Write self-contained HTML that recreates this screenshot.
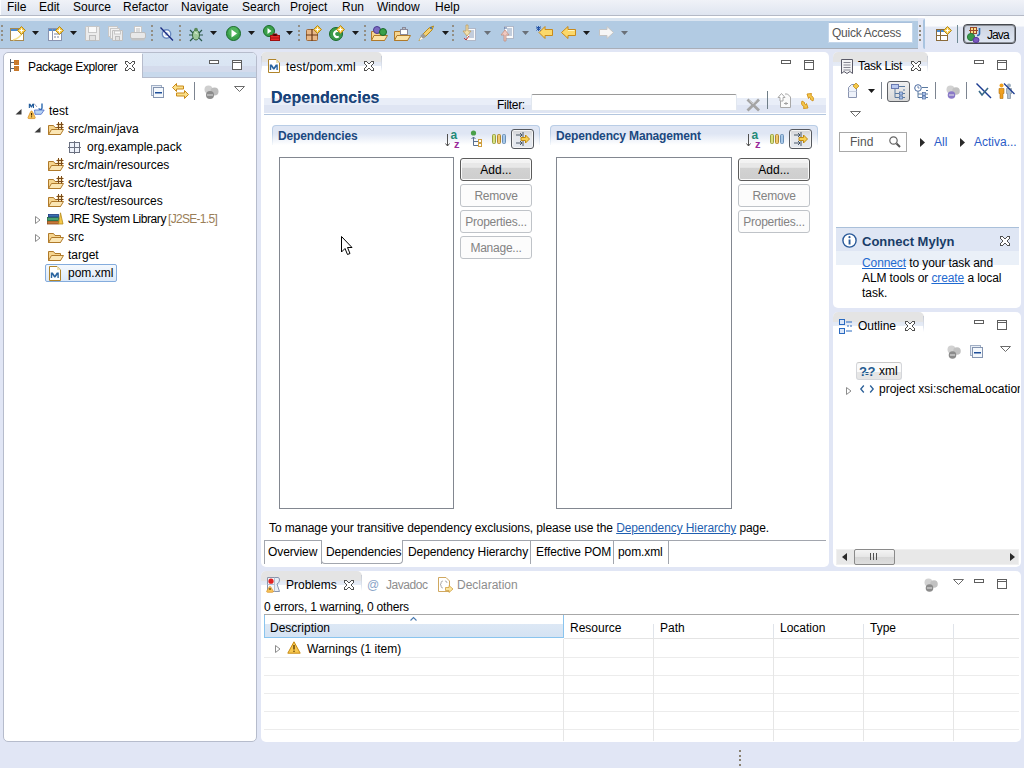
<!DOCTYPE html>
<html><head><meta charset="utf-8">
<style>
*{margin:0;padding:0;box-sizing:border-box}
html,body{width:1024px;height:768px;overflow:hidden}
body{position:relative;background:#E1E6F5;font-family:"Liberation Sans",sans-serif;font-size:12px;color:#000}
.a{position:absolute}
.t{position:absolute;white-space:nowrap;line-height:14px;font-size:12px;color:#000}
svg{position:absolute;overflow:visible}
.g{color:#8d8d8d}
.lk{color:#1f5fb0;text-decoration:underline}
</style></head><body>

<div class="a" style="left:0px;top:0px;width:1024px;height:15px;background:linear-gradient(#f0f2f8,#dfe5f0)"></div>
<div class="a" style="left:0px;top:0px;width:1px;height:15px;background:#fafbfd"></div>
<div class="a" style="left:0px;top:15px;width:1024px;height:1px;background:#b4b9c6"></div>
<div class="a" style="left:0px;top:16px;width:1024px;height:2px;background:#fff"></div>
<div class="a" style="left:0px;top:18px;width:918px;height:3px;background:#d9e4f0"></div>
<div class="t" style="left:7px;top:0px;">File</div>
<div class="t" style="left:39px;top:0px;">Edit</div>
<div class="t" style="left:73px;top:0px;">Source</div>
<div class="t" style="left:123px;top:0px;">Refactor</div>
<div class="t" style="left:181px;top:0px;">Navigate</div>
<div class="t" style="left:242px;top:0px;">Search</div>
<div class="t" style="left:290px;top:0px;">Project</div>
<div class="t" style="left:342px;top:0px;">Run</div>
<div class="t" style="left:377px;top:0px;">Window</div>
<div class="t" style="left:435px;top:0px;">Help</div>
<div class="a" style="left:0px;top:21px;width:918px;height:27px;background:#b2cbe3"></div>
<div class="a" style="left:0px;top:48px;width:918px;height:1px;background:#a9aeb8"></div>
<div class="a" style="left:925px;top:16px;width:99px;height:34px;background:linear-gradient(#fafbfd 0,#fafbfd 30%,#e3e8f4 32%,#e1e6f5 100%)"></div>
<svg style="left:1px;top:25px" width="3" height="17" viewBox="0 0 3 17"><rect x="0" y="0" width="2" height="2" fill="#8f8778" opacity="0.9"/><rect x="0" y="5" width="2" height="2" fill="#8f8778" opacity="0.9"/><rect x="0" y="9" width="2" height="2" fill="#8f8778" opacity="0.9"/><rect x="0" y="14" width="2" height="2" fill="#8f8778" opacity="0.9"/></svg>
<svg style="left:10px;top:26px" width="16" height="15" viewBox="0 0 16 15"><rect x="0.5" y="2.5" width="13" height="12" fill="#fff" stroke="#a88a50"/><rect x="1" y="3" width="12" height="2" fill="#4a8ad0"/><path d="M3 14 Q10 12 12 7" stroke="#f5e08a" fill="none" stroke-width="1.5"/><path d="M11.5 0.5 L15.5 4.5 L11.5 8.5 L7.5 4.5 Z" fill="#f4c84a" stroke="#b58a1a"/><path d="M11.5 2.5v4M9.5 4.5h4" stroke="#fff"/></svg>
<svg style="left:32px;top:31px" width="7" height="4" viewBox="0 0 7 4"><path d="M0 0 H7 L3.5 4 Z" fill="#1a1a1a"/></svg>
<svg style="left:48px;top:26px" width="16" height="15" viewBox="0 0 16 15"><rect x="0.5" y="2.5" width="13" height="12" fill="#fff" stroke="#8a94b0"/><rect x="1" y="3" width="12" height="2" fill="#4a8ad0"/><path d="M4.5 3 V14" stroke="#8a94b0"/><path d="M6 8h5M6 11h2M9 11h2" stroke="#7a84a0"/><path d="M11.5 0.5 L15.5 4.5 L11.5 8.5 L7.5 4.5 Z" fill="#f4c84a" stroke="#b58a1a"/><path d="M11.5 2.5v4M9.5 4.5h4" stroke="#fff"/></svg>
<svg style="left:70px;top:31px" width="7" height="4" viewBox="0 0 7 4"><path d="M0 0 H7 L3.5 4 Z" fill="#1a1a1a"/></svg>
<svg style="left:85px;top:26px" width="15" height="15" viewBox="0 0 15 15"><path d="M0.5 1.5 Q0.5 0.5 1.5 0.5 H13.5 Q14.5 0.5 14.5 1.5 V14.5 H0.5 Z" fill="#ececec" stroke="#c4c4c4"/><rect x="3.5" y="0.5" width="8" height="6" fill="#fafafa" stroke="#c8c8c8"/><rect x="4.5" y="9.5" width="6" height="5" fill="#e2e2e2" stroke="#bdbdbd"/></svg>
<svg style="left:108px;top:26px" width="15" height="15" viewBox="0 0 15 15"><rect x="0.5" y="0.5" width="9" height="10" fill="#f2f2f2" stroke="#c8c8c8"/><rect x="2.5" y="2.5" width="9" height="10" fill="#f2f2f2" stroke="#c8c8c8"/><path d="M4.5 4.5 H14.5 V14.5 H4.5 Z" fill="#ececec" stroke="#c0c0c0"/><rect x="6.5" y="5" width="6" height="3" fill="#fafafa" stroke="#c8c8c8"/><rect x="7.5" y="10.5" width="4" height="4" fill="#e2e2e2" stroke="#bdbdbd"/></svg>
<svg style="left:130px;top:26px" width="16" height="15" viewBox="0 0 16 15"><rect x="4.5" y="0.5" width="7" height="7" fill="#fafafa" stroke="#c8c8c8"/><path d="M6 3h4M6 5h4" stroke="#bdbdbd"/><rect x="0.5" y="6.5" width="15" height="6" rx="1.5" fill="#e8e8e8" stroke="#bdbdbd"/><rect x="1.5" y="12.5" width="13" height="2" fill="#c4c4c4"/></svg>
<svg style="left:151px;top:25px" width="3" height="17" viewBox="0 0 3 17"><rect x="0" y="0" width="2" height="2" fill="#8f8778" opacity="0.9"/><rect x="0" y="5" width="2" height="2" fill="#8f8778" opacity="0.9"/><rect x="0" y="9" width="2" height="2" fill="#8f8778" opacity="0.9"/><rect x="0" y="14" width="2" height="2" fill="#8f8778" opacity="0.9"/></svg>
<svg style="left:160px;top:27px" width="14" height="14" viewBox="0 0 14 14"><circle cx="6.5" cy="7" r="4.2" fill="#fff" stroke="#6a8ac0" stroke-width="1.4"/><circle cx="6.5" cy="7" r="2" fill="#b8cce8"/><path d="M0.5 0.5 L13 13.5" stroke="#1a2a80" stroke-width="1.3"/></svg>
<svg style="left:179px;top:25px" width="3" height="17" viewBox="0 0 3 17"><rect x="0" y="0" width="2" height="2" fill="#8f8778" opacity="0.9"/><rect x="0" y="5" width="2" height="2" fill="#8f8778" opacity="0.9"/><rect x="0" y="9" width="2" height="2" fill="#8f8778" opacity="0.9"/><rect x="0" y="14" width="2" height="2" fill="#8f8778" opacity="0.9"/></svg>
<svg style="left:188px;top:26px" width="16" height="16" viewBox="0 0 16 16"><ellipse cx="8" cy="9" rx="3.5" ry="5" fill="#9ec89a" stroke="#3a6a3a"/><circle cx="8" cy="3.5" r="1.8" fill="#5a8a5a"/><path d="M2 4 L5 7 M14 4 L11 7 M1 9 H4.5 M15 9 H11.5 M2 15 L5 12 M14 15 L11 12" stroke="#2a5a4a" stroke-width="1.2"/><path d="M6.5 7 Q8 6 9.5 8" stroke="#e8f8e0" fill="none"/></svg>
<svg style="left:210px;top:31px" width="7" height="4" viewBox="0 0 7 4"><path d="M0 0 H7 L3.5 4 Z" fill="#1a1a1a"/></svg>
<svg style="left:226px;top:26px" width="15" height="15" viewBox="0 0 15 15"><circle cx="7.5" cy="7.5" r="7" fill="#3aa04a" stroke="#1a6a2a"/><circle cx="7.5" cy="6" r="5" fill="#5ec06a" opacity="0.6"/><path d="M5.5 3.5 L11 7.5 L5.5 11.5 Z" fill="#fff"/></svg>
<svg style="left:248px;top:31px" width="7" height="4" viewBox="0 0 7 4"><path d="M0 0 H7 L3.5 4 Z" fill="#1a1a1a"/></svg>
<svg style="left:263px;top:25px" width="17" height="17" viewBox="0 0 17 17"><circle cx="6" cy="6" r="5.5" fill="#3aa04a" stroke="#1a6a2a"/><path d="M4.5 3 L8.5 6 L4.5 9 Z" fill="#fff"/><rect x="7.5" y="10.5" width="9" height="5" fill="#e82a2a" stroke="#a01010"/><path d="M10 10.5v-1.5h4v1.5M7.5 13h9" stroke="#a01010"/></svg>
<svg style="left:286px;top:31px" width="7" height="4" viewBox="0 0 7 4"><path d="M0 0 H7 L3.5 4 Z" fill="#1a1a1a"/></svg>
<svg style="left:298px;top:25px" width="3" height="17" viewBox="0 0 3 17"><rect x="0" y="0" width="2" height="2" fill="#8f8778" opacity="0.9"/><rect x="0" y="5" width="2" height="2" fill="#8f8778" opacity="0.9"/><rect x="0" y="9" width="2" height="2" fill="#8f8778" opacity="0.9"/><rect x="0" y="14" width="2" height="2" fill="#8f8778" opacity="0.9"/></svg>
<svg style="left:306px;top:25px" width="16" height="16" viewBox="0 0 16 16"><rect x="0.5" y="4.5" width="11" height="11" rx="1" fill="#e8b888" stroke="#a06a3a"/><path d="M6 4 V16 M0 10 H12" stroke="#6a3a1a" stroke-width="1.2"/><path d="M11.5 0.5 L15.5 4.5 L11.5 8.5 L7.5 4.5 Z" fill="#f4c84a" stroke="#b58a1a"/><path d="M11.5 2.5v4M9.5 4.5h4" stroke="#fff"/></svg>
<svg style="left:329px;top:25px" width="16" height="16" viewBox="0 0 16 16"><circle cx="7" cy="9" r="6.5" fill="#3a9a4a" stroke="#1a6a2a"/><path d="M9.8 6.5 A3 3 0 1 0 9.8 11.5" stroke="#fff" stroke-width="2" fill="none"/><path d="M11.5 0.5 L15.5 4.5 L11.5 8.5 L7.5 4.5 Z" fill="#f4c84a" stroke="#b58a1a"/><path d="M11.5 2.5v4M9.5 4.5h4" stroke="#fff"/></svg>
<svg style="left:352px;top:31px" width="7" height="4" viewBox="0 0 7 4"><path d="M0 0 H7 L3.5 4 Z" fill="#1a1a1a"/></svg>
<svg style="left:364px;top:25px" width="3" height="17" viewBox="0 0 3 17"><rect x="0" y="0" width="2" height="2" fill="#8f8778" opacity="0.9"/><rect x="0" y="5" width="2" height="2" fill="#8f8778" opacity="0.9"/><rect x="0" y="9" width="2" height="2" fill="#8f8778" opacity="0.9"/><rect x="0" y="14" width="2" height="2" fill="#8f8778" opacity="0.9"/></svg>
<svg style="left:371px;top:26px" width="17" height="15" viewBox="0 0 17 15"><path d="M0.5 5.5 H6 L7 7 H13.5 V14.5 H0.5 Z" fill="#f6d58f" stroke="#b07a2a"/><path d="M0.5 14.5 L3 9.5 H16.5 L13.5 14.5 Z" fill="#fbe3a8" stroke="#b07a2a"/><circle cx="6" cy="4" r="3.5" fill="#7a6ac0" stroke="#4a3a90"/><circle cx="12" cy="6" r="3.5" fill="#3aa04a" stroke="#1a6a2a"/></svg>
<svg style="left:394px;top:26px" width="17" height="15" viewBox="0 0 17 15"><path d="M0.5 5.5 H6 L7 7 H13.5 V14.5 H0.5 Z" fill="#f6d58f" stroke="#b07a2a"/><path d="M0.5 14.5 L3 9.5 H16.5 L13.5 14.5 Z" fill="#fbe3a8" stroke="#b07a2a"/><rect x="6.5" y="3.5" width="7" height="5" fill="#fff" stroke="#8a8a9a"/><rect x="8.5" y="1.5" width="3" height="2" fill="#bbb" stroke="#8a8a9a"/></svg>
<svg style="left:417px;top:25px" width="18" height="17" viewBox="0 0 18 17"><path d="M2 15.5 L6 9 L12 3 L16.5 1 L15 5 L9 11 Z" fill="#f5d070" stroke="#b58a1a"/><path d="M2 15.5 L4.5 11.5 L6.5 13.5 Z" fill="#fff"/><rect x="4" y="9" width="4" height="4" transform="rotate(45 6 11)" fill="#9a9a9a"/><circle cx="14" cy="3" r="1" fill="#2a6ac0"/></svg>
<svg style="left:442px;top:31px" width="7" height="4" viewBox="0 0 7 4"><path d="M0 0 H7 L3.5 4 Z" fill="#1a1a1a"/></svg>
<svg style="left:452px;top:25px" width="3" height="17" viewBox="0 0 3 17"><rect x="0" y="0" width="2" height="2" fill="#8f8778" opacity="0.9"/><rect x="0" y="5" width="2" height="2" fill="#8f8778" opacity="0.9"/><rect x="0" y="9" width="2" height="2" fill="#8f8778" opacity="0.9"/><rect x="0" y="14" width="2" height="2" fill="#8f8778" opacity="0.9"/></svg>
<svg style="left:462px;top:25px" width="14" height="16" viewBox="0 0 14 16"><rect x="4.5" y="3.5" width="9" height="12" fill="#fafafa" stroke="#b0b8c8"/><path d="M7 6h5M7 8h5M7 10h5M7 12h5" stroke="#8aa0c0"/><path d="M4 0 V6 H1 L5 11 L9 6 H6 V0 Z" fill="#f0e0b0" stroke="#c0a060" stroke-width="0.8"/><path d="M2 13 l2 2 l3 -4" stroke="#c03a3a" fill="none"/></svg>
<svg style="left:484px;top:31px" width="7" height="4" viewBox="0 0 7 4"><path d="M0 0 H7 L3.5 4 Z" fill="#6a7078"/></svg>
<svg style="left:500px;top:25px" width="14" height="16" viewBox="0 0 14 16"><rect x="4.5" y="1.5" width="9" height="12" fill="#fafafa" stroke="#b0b8c8"/><path d="M7 4h5M7 6h5M7 8h5M7 10h5" stroke="#8aa0c0"/><path d="M4 16 V10 H1 L5 5 L9 10 H6 V16 Z" fill="#f0c8c0" stroke="#c09080" stroke-width="0.8"/><path d="M4 3h3" stroke="#4a6aa0"/></svg>
<svg style="left:522px;top:31px" width="7" height="4" viewBox="0 0 7 4"><path d="M0 0 H7 L3.5 4 Z" fill="#6a7078"/></svg>
<svg style="left:536px;top:26px" width="17" height="13" viewBox="0 0 17 13"><path d="M16.5 3.5 H9 V0.5 L3 6.5 L9 12.5 V9.5 H16.5 Z" fill="#fbd86a" stroke="#c98a1a"/><path d="M0 2h5M2.5 0v5M0.5 0.5l4 4M4.5 0.5l-4 4" stroke="#1a4aa0" stroke-width="0.9"/></svg>
<svg style="left:561px;top:26px" width="15" height="13" viewBox="0 0 15 13"><path d="M14.5 3.5 H7 V0.5 L0.5 6.5 L7 12.5 V9.5 H14.5 Z" fill="#fbd86a" stroke="#c98a1a"/><path d="M7 4.5 H13.5" stroke="#fff6c0"/></svg>
<svg style="left:583px;top:31px" width="7" height="4" viewBox="0 0 7 4"><path d="M0 0 H7 L3.5 4 Z" fill="#1a1a1a"/></svg>
<svg style="left:599px;top:26px" width="15" height="13" viewBox="0 0 15 13"><path d="M0.5 3.5 H8 V0.5 L14.5 6.5 L8 12.5 V9.5 H0.5 Z" fill="#f6f6f6" stroke="#c4c4c4"/></svg>
<svg style="left:621px;top:31px" width="7" height="4" viewBox="0 0 7 4"><path d="M0 0 H7 L3.5 4 Z" fill="#6a7078"/></svg>
<div class="a" style="left:823px;top:21px;width:95px;height:27px;background:#b2cbe3"></div>
<div class="a" style="left:828px;top:22px;width:85px;height:21px;background:#fff;border:1px solid #c4d6ea;border-top-color:#a9c0dc"></div>
<div class="t" style="left:832px;top:26px;color:#555;letter-spacing:-0.25px">Quick Access</div>
<svg style="left:919px;top:23px" width="2" height="18" viewBox="0 0 2 18"><rect x="0" y="2" width="2" height="2" fill="#8f8778"/><rect x="0" y="7" width="2" height="2" fill="#8f8778"/><rect x="0" y="11" width="2" height="2" fill="#8f8778"/><rect x="0" y="16" width="2" height="2" fill="#8f8778"/></svg>
<div class="a" style="left:923px;top:19px;width:2px;height:30px;background:#a9c4e0;border-radius:2px 0 0 2px"></div>
<svg style="left:936px;top:26px" width="16" height="15" viewBox="0 0 16 15"><rect x="0.5" y="3.5" width="11" height="11" fill="#fff" stroke="#8a6a3a"/><rect x="1" y="4" width="10" height="2" fill="#4a8ad0"/><path d="M4.5 4 V14 M1 9.5 H11" stroke="#8a6a3a"/><path d="M11.5 0.5 L15.5 4.5 L11.5 8.5 L7.5 4.5 Z" fill="#f4c84a" stroke="#b58a1a"/><path d="M11.5 2.5v4M9.5 4.5h4" stroke="#fff"/></svg>
<div class="a" style="left:957px;top:25px;width:1px;height:18px;background:#6f8a94"></div>
<div class="a" style="left:963px;top:24px;width:53px;height:20px;background:linear-gradient(#c8cfdb,#d4dbe8 40%,#dfe6f2);border:1px solid #45484e;border-radius:4px;box-shadow:inset 0 0 0 1px #8a8e96"></div>
<svg style="left:967px;top:27px" width="14" height="16" viewBox="0 0 14 16"><rect x="3.5" y="0.5" width="6" height="6" fill="#fbe08a" stroke="#9a4a2a"/><path d="M6.5 0 V7 M2 3.5 H11" stroke="#9a4a2a"/><path d="M12.5 1 V6.5 Q12.5 8.5 10 8.5" stroke="#2a6ab0" stroke-width="1.6" fill="none"/><circle cx="4" cy="10" r="3.6" fill="#3a9a4a" stroke="#2a7a3a"/><ellipse cx="9" cy="13" rx="3" ry="2.6" fill="#7a5ac0" stroke="#5a3aa0"/></svg>
<div class="t" style="left:987px;top:28px;letter-spacing:-0.9px">Java</div>
<div class="a" style="left:3px;top:52px;width:254px;height:690px;background:#fff;border:1px solid #b6bccc;border-radius:5px"></div>
<div class="a" style="left:142px;top:53px;width:114px;height:24px;background:linear-gradient(#dce7f4 0,#dae5f3 52%,#d4dbec 55%,#d4dbec 78%,#c8d9ec 81%,#c8d9ec 100%);border-top-right-radius:4px"></div>
<div class="a" style="left:142px;top:77px;width:114px;height:1px;background:#b6bccc"></div>
<div class="a" style="left:142px;top:54px;width:1px;height:23px;background:#b6bccc"></div>
<svg style="left:9px;top:59px" width="14" height="13" viewBox="0 0 14 13"><path d="M1.5 0 V13 M1.5 3.5 H5 M1.5 9.5 H5" stroke="#5a6470"/><rect x="5" y="1" width="5" height="5" fill="#c8782a"/><rect x="5" y="7" width="5" height="5" fill="#c8782a"/><path d="M6.5 2.5h0.1M8.5 2.5h0.1M6.5 4.5h0.1M8.5 4.5h0.1M6.5 8.5h0.1M8.5 8.5h0.1M6.5 10.5h0.1M8.5 10.5h0.1" stroke="#fff4b0" stroke-width="1.2"/></svg>
<div class="t" style="left:28px;top:60px;letter-spacing:-0.35px">Package Explorer</div>
<svg style="left:125px;top:61px" width="10" height="10" viewBox="0 0 10 10"><g fill="#fff" shape-rendering="crispEdges"><rect x="1" y="1" width="2" height="1"/><rect x="7" y="1" width="2" height="1"/><rect x="1" y="2" width="3" height="1"/><rect x="6" y="2" width="3" height="1"/><rect x="2" y="3" width="6" height="1"/><rect x="3" y="4" width="4" height="1"/><rect x="3" y="5" width="4" height="1"/><rect x="2" y="6" width="6" height="1"/><rect x="1" y="7" width="3" height="1"/><rect x="6" y="7" width="3" height="1"/><rect x="1" y="8" width="2" height="1"/><rect x="7" y="8" width="2" height="1"/></g><g fill="#505050" shape-rendering="crispEdges"><rect x="0" y="0" width="1" height="1"/><rect x="1" y="0" width="1" height="1"/><rect x="2" y="0" width="1" height="1"/><rect x="7" y="0" width="1" height="1"/><rect x="8" y="0" width="1" height="1"/><rect x="9" y="0" width="1" height="1"/><rect x="0" y="1" width="1" height="1"/><rect x="3" y="1" width="1" height="1"/><rect x="6" y="1" width="1" height="1"/><rect x="9" y="1" width="1" height="1"/><rect x="0" y="2" width="1" height="1"/><rect x="4" y="2" width="1" height="1"/><rect x="5" y="2" width="1" height="1"/><rect x="9" y="2" width="1" height="1"/><rect x="1" y="3" width="1" height="1"/><rect x="8" y="3" width="1" height="1"/><rect x="2" y="4" width="1" height="1"/><rect x="7" y="4" width="1" height="1"/><rect x="2" y="5" width="1" height="1"/><rect x="7" y="5" width="1" height="1"/><rect x="1" y="6" width="1" height="1"/><rect x="8" y="6" width="1" height="1"/><rect x="0" y="7" width="1" height="1"/><rect x="4" y="7" width="1" height="1"/><rect x="5" y="7" width="1" height="1"/><rect x="9" y="7" width="1" height="1"/><rect x="0" y="8" width="1" height="1"/><rect x="3" y="8" width="1" height="1"/><rect x="6" y="8" width="1" height="1"/><rect x="9" y="8" width="1" height="1"/><rect x="0" y="9" width="1" height="1"/><rect x="1" y="9" width="1" height="1"/><rect x="2" y="9" width="1" height="1"/><rect x="7" y="9" width="1" height="1"/><rect x="8" y="9" width="1" height="1"/><rect x="9" y="9" width="1" height="1"/></g></svg>
<svg style="left:209px;top:60px" width="10" height="4" viewBox="0 0 10 4"><rect x="0.5" y="0.5" width="9" height="3" fill="#fff" stroke="#5e5e5e"/></svg>
<svg style="left:232px;top:60px" width="10" height="10" viewBox="0 0 10 10"><rect x="0.5" y="0.5" width="9" height="9" fill="#fff" stroke="#5e5e5e"/><rect x="1" y="2" width="8" height="1" fill="#5e5e5e"/></svg>
<svg style="left:151px;top:85px" width="13" height="13" viewBox="0 0 13 13"><rect x="0.5" y="0.5" width="10" height="10" fill="#e8eef6" stroke="#a0aec4"/><rect x="2.5" y="2.5" width="10" height="10" fill="#f4f8fc" stroke="#8494b0"/><rect x="4" y="7" width="7" height="1.5" fill="#1f4f9a"/></svg>
<svg style="left:172px;top:83px" width="17" height="16" viewBox="0 0 17 16"><path d="M0.5 4.5 L4.5 0.5 V3 H11.5 V6 H4.5 V8.5 Z" fill="#fbe08a" stroke="#c98a1a"/><path d="M16.5 11.5 L12.5 7.5 V10 H4.5 V13 H12.5 V15.5 Z" fill="#fbe08a" stroke="#c98a1a"/></svg>
<div class="a" style="left:194px;top:82px;width:1px;height:18px;background:#7c8490"></div>
<svg style="left:204px;top:85px" width="15" height="14" viewBox="0 0 15 14"><circle cx="4.5" cy="4.5" r="4" fill="#cfcfcf"/><circle cx="10.5" cy="6.5" r="4" fill="#bdbdbd"/><circle cx="6" cy="10" r="4" fill="#8c8c8c"/><path d="M3 10h6" stroke="#e0e0e0"/></svg>
<svg style="left:234px;top:86px" width="11" height="6" viewBox="0 0 11 6"><path d="M0.5 0.5 H10.5 L5.5 5.5 Z" fill="#fff" stroke="#6b6b6b"/></svg>
<svg style="left:15px;top:109px" width="7" height="6" viewBox="0 0 7 6"><path d="M6.5 0 V5.5 H0.5 Z" fill="#3c3c3c"/></svg>
<svg style="left:28px;top:103px" width="17" height="17" viewBox="0 0 17 17"><path d="M0.8 5 V0.8 H2.4 L3.4 2.8 L4.4 0.8 H6 V5 H4.9 V2.8 L3.8 4.6 H3 L1.9 2.8 V5 Z" fill="#1f5a9a"/><path d="M14 0.5 V5 Q14 6.5 12.5 6.5 Q11 6.5 11 5.2" stroke="#2a68b0" stroke-width="1.4" fill="none"/><path d="M6.5 7 H16.2 L13.2 11.3 H7 Z" fill="#b8d4f4" stroke="#4a6ac8" stroke-width="0.8"/><path d="M6 0.5 L9 4" stroke="#6a7aa0" stroke-width="0.7"/><path d="M3.5 8 Q4.2 8 4.6 9 L7.2 14.5 Q7.4 15.6 6.3 15.6 H0.8 Q-0.3 15.6 0 14.5 L2.5 9 Q2.9 8 3.5 8 Z" fill="#f8c458" stroke="#d89028" stroke-width="0.8"/><path d="M3.6 10 V12.6" stroke="#3a2000" stroke-width="1.1"/><rect x="3.1" y="13.3" width="1" height="1" fill="#3a2000"/></svg>
<div class="t" style="left:49px;top:104px;">test</div>
<svg style="left:34px;top:127px" width="7" height="6" viewBox="0 0 7 6"><path d="M6.5 0 V5.5 H0.5 Z" fill="#3c3c3c"/></svg>
<svg style="left:48px;top:122px" width="16" height="14" viewBox="0 0 16 14"><path d="M0.5 3.5 V12.5 H12.5 V5.5 H7 L5.5 3.5 Z" fill="#f6d58f" stroke="#b07a2a"/><path d="M0.5 12.5 L3.5 7.5 H15.5 L12.5 12.5 Z" fill="#fbe6b4" stroke="#b07a2a"/><rect x="9" y="1" width="6" height="6" fill="#f8e4b8"/><path d="M10.5 0 V7.5 M13.5 0 V7.5 M8.5 2.5 H15.5 M8.5 5.5 H15.5" stroke="#7a4a1a"/></svg>
<div class="t" style="left:68px;top:122px;">src/main/java</div>
<svg style="left:68px;top:141px" width="13" height="13" viewBox="0 0 13 13"><rect x="1.5" y="1.5" width="10" height="10" fill="#eef2fa" stroke="#6a7080"/><path d="M6.5 0 V13 M0 6.5 H13" stroke="#6a7080"/></svg>
<div class="t" style="left:87px;top:140px;">org.example.pack</div>
<svg style="left:48px;top:158px" width="16" height="14" viewBox="0 0 16 14"><path d="M0.5 3.5 V12.5 H12.5 V5.5 H7 L5.5 3.5 Z" fill="#f6d58f" stroke="#b07a2a"/><path d="M0.5 12.5 L3.5 7.5 H15.5 L12.5 12.5 Z" fill="#fbe6b4" stroke="#b07a2a"/><rect x="9" y="1" width="6" height="6" fill="#f8e4b8"/><path d="M10.5 0 V7.5 M13.5 0 V7.5 M8.5 2.5 H15.5 M8.5 5.5 H15.5" stroke="#7a4a1a"/></svg>
<div class="t" style="left:68px;top:158px;">src/main/resources</div>
<svg style="left:48px;top:176px" width="16" height="14" viewBox="0 0 16 14"><path d="M0.5 3.5 V12.5 H12.5 V5.5 H7 L5.5 3.5 Z" fill="#f6d58f" stroke="#b07a2a"/><path d="M0.5 12.5 L3.5 7.5 H15.5 L12.5 12.5 Z" fill="#fbe6b4" stroke="#b07a2a"/><rect x="9" y="1" width="6" height="6" fill="#f8e4b8"/><path d="M10.5 0 V7.5 M13.5 0 V7.5 M8.5 2.5 H15.5 M8.5 5.5 H15.5" stroke="#7a4a1a"/></svg>
<div class="t" style="left:68px;top:176px;">src/test/java</div>
<svg style="left:48px;top:194px" width="16" height="14" viewBox="0 0 16 14"><path d="M0.5 3.5 V12.5 H12.5 V5.5 H7 L5.5 3.5 Z" fill="#f6d58f" stroke="#b07a2a"/><path d="M0.5 12.5 L3.5 7.5 H15.5 L12.5 12.5 Z" fill="#fbe6b4" stroke="#b07a2a"/><rect x="9" y="1" width="6" height="6" fill="#f8e4b8"/><path d="M10.5 0 V7.5 M13.5 0 V7.5 M8.5 2.5 H15.5 M8.5 5.5 H15.5" stroke="#7a4a1a"/></svg>
<div class="t" style="left:68px;top:194px;">src/test/resources</div>
<svg style="left:35px;top:216px" width="6" height="8" viewBox="0 0 6 8"><path d="M0.5 0.5 L5 4 L0.5 7.5 Z" fill="#fff" stroke="#8c8c8c"/></svg>
<svg style="left:47px;top:212px" width="17" height="13" viewBox="0 0 17 13"><rect x="0.5" y="9" width="11" height="3" fill="#c87a3a" stroke="#8a4a1a" stroke-width="0.8"/><rect x="0.5" y="5.5" width="11" height="3" fill="#4aa070" stroke="#1a6a3a" stroke-width="0.8"/><rect x="1.5" y="2.5" width="10" height="2.5" fill="#3a70b0" stroke="#1a3a80" stroke-width="0.8"/><path d="M11.5 12 L13.5 0.8 L16 12 Z" fill="#f5c84a" stroke="#b58a1a" stroke-width="0.8"/></svg>
<div class="t" style="left:68px;top:212px;letter-spacing:-0.45px">JRE System Library</div>
<div class="t" style="left:168px;top:212px;letter-spacing:-0.7px;color:#9a7e58">[J2SE-1.5]</div>
<svg style="left:35px;top:234px" width="6" height="8" viewBox="0 0 6 8"><path d="M0.5 0.5 L5 4 L0.5 7.5 Z" fill="#fff" stroke="#8c8c8c"/></svg>
<svg style="left:48px;top:230px" width="16" height="14" viewBox="0 0 16 14"><path d="M0.5 3.5 V12.5 H12.5 V5.5 H7 L5.5 3.5 Z" fill="#f6d58f" stroke="#b07a2a"/><path d="M0.5 12.5 L3.5 7.5 H15.5 L12.5 12.5 Z" fill="#fbe6b4" stroke="#b07a2a"/></svg>
<div class="t" style="left:68px;top:230px;">src</div>
<svg style="left:48px;top:248px" width="16" height="14" viewBox="0 0 16 14"><path d="M0.5 3.5 V12.5 H12.5 V5.5 H7 L5.5 3.5 Z" fill="#f6d58f" stroke="#b07a2a"/><path d="M0.5 12.5 L3.5 7.5 H15.5 L12.5 12.5 Z" fill="#fbe6b4" stroke="#b07a2a"/></svg>
<div class="t" style="left:68px;top:248px;">target</div>
<div class="a" style="left:45px;top:264px;width:72px;height:18px;background:linear-gradient(#f4f8fd,#dce9f8);border:1px solid #84acdd;border-radius:2px"></div>
<svg style="left:49px;top:266px" width="12" height="15" viewBox="0 0 12 15"><path d="M0.5 0.5 H8 L11.5 4 V14.5 H0.5 Z" fill="#fff" stroke="#b0842a"/><path d="M8 0.5 V4 H11.5 Z" fill="#f0e2b0"/><path d="M1.8 12 V6.5 H3.8 L5.8 9.5 L7.8 6.5 H9.8 V12 H8.4 V8.8 L6.4 11.5 H5.2 L3.2 8.8 V12 Z" fill="#2a64a0"/></svg>
<div class="t" style="left:68px;top:266px;">pom.xml</div>
<div class="a" style="left:261px;top:52px;width:568px;height:515px;background:#fff;border-radius:5px"></div>
<div class="a" style="left:261px;top:52px;width:121px;height:25px;background:linear-gradient(#e4e4e4 0,#e4e4e4 40%,#e2e8f4 41%,#e6ecf6 54%,#fff 58%);border-top-left-radius:5px;border-top-right-radius:5px"></div>
<div class="a" style="left:381px;top:56px;width:1px;height:16px;background:linear-gradient(#c8ccd4,#e0e6f0 70%,#fff)"></div>
<div class="a" style="left:261px;top:56px;width:1px;height:16px;background:linear-gradient(#c8ccd4,#e0e6f0 70%,#fff)"></div>
<svg style="left:268px;top:59px" width="12" height="14" viewBox="0 0 12 14"><path d="M0.5 0.5 H8 L11.5 4 V13.5 H0.5 Z" fill="#fff" stroke="#b0842a"/><path d="M8 0.5 V4 H11.5 Z" fill="#f0e2b0"/><path d="M1.8 11 V5.5 H3.8 L5.8 8.5 L7.8 5.5 H9.8 V11 H8.4 V7.8 L6.4 10.5 H5.2 L3.2 7.8 V11 Z" fill="#2a64a0"/></svg>
<div class="t" style="left:286px;top:60px;letter-spacing:0.15px">test/pom.xml</div>
<svg style="left:364px;top:61px" width="10" height="10" viewBox="0 0 10 10"><g fill="#fff" shape-rendering="crispEdges"><rect x="1" y="1" width="2" height="1"/><rect x="7" y="1" width="2" height="1"/><rect x="1" y="2" width="3" height="1"/><rect x="6" y="2" width="3" height="1"/><rect x="2" y="3" width="6" height="1"/><rect x="3" y="4" width="4" height="1"/><rect x="3" y="5" width="4" height="1"/><rect x="2" y="6" width="6" height="1"/><rect x="1" y="7" width="3" height="1"/><rect x="6" y="7" width="3" height="1"/><rect x="1" y="8" width="2" height="1"/><rect x="7" y="8" width="2" height="1"/></g><g fill="#505050" shape-rendering="crispEdges"><rect x="0" y="0" width="1" height="1"/><rect x="1" y="0" width="1" height="1"/><rect x="2" y="0" width="1" height="1"/><rect x="7" y="0" width="1" height="1"/><rect x="8" y="0" width="1" height="1"/><rect x="9" y="0" width="1" height="1"/><rect x="0" y="1" width="1" height="1"/><rect x="3" y="1" width="1" height="1"/><rect x="6" y="1" width="1" height="1"/><rect x="9" y="1" width="1" height="1"/><rect x="0" y="2" width="1" height="1"/><rect x="4" y="2" width="1" height="1"/><rect x="5" y="2" width="1" height="1"/><rect x="9" y="2" width="1" height="1"/><rect x="1" y="3" width="1" height="1"/><rect x="8" y="3" width="1" height="1"/><rect x="2" y="4" width="1" height="1"/><rect x="7" y="4" width="1" height="1"/><rect x="2" y="5" width="1" height="1"/><rect x="7" y="5" width="1" height="1"/><rect x="1" y="6" width="1" height="1"/><rect x="8" y="6" width="1" height="1"/><rect x="0" y="7" width="1" height="1"/><rect x="4" y="7" width="1" height="1"/><rect x="5" y="7" width="1" height="1"/><rect x="9" y="7" width="1" height="1"/><rect x="0" y="8" width="1" height="1"/><rect x="3" y="8" width="1" height="1"/><rect x="6" y="8" width="1" height="1"/><rect x="9" y="8" width="1" height="1"/><rect x="0" y="9" width="1" height="1"/><rect x="1" y="9" width="1" height="1"/><rect x="2" y="9" width="1" height="1"/><rect x="7" y="9" width="1" height="1"/><rect x="8" y="9" width="1" height="1"/><rect x="9" y="9" width="1" height="1"/></g></svg>
<svg style="left:781px;top:60px" width="10" height="4" viewBox="0 0 10 4"><rect x="0.5" y="0.5" width="9" height="3" fill="#fff" stroke="#5e5e5e"/></svg>
<svg style="left:804px;top:60px" width="10" height="10" viewBox="0 0 10 10"><rect x="0.5" y="0.5" width="9" height="9" fill="#fff" stroke="#5e5e5e"/><rect x="1" y="2" width="8" height="1" fill="#5e5e5e"/></svg>
<div class="t" style="left:271px;top:92px;font-size:16px;font-weight:bold;color:#19447a;line-height:18px;top:89px">Dependencies</div>
<div class="a" style="left:264px;top:98px;width:562px;height:7px;background:#e9eef8"></div>
<div class="a" style="left:264px;top:105px;width:562px;height:8px;background:#dfe5f3"></div>
<div class="a" style="left:264px;top:114px;width:562px;height:1px;background:#b3c6de"></div>
<div class="t" style="left:271px;top:92px;font-size:16px;font-weight:bold;color:#19447a;line-height:18px;top:89px">Dependencies</div>
<div class="t" style="left:497px;top:98px;letter-spacing:-0.3px">Filter:</div>
<div class="a" style="left:531px;top:94px;width:206px;height:17px;background:#fff;border:1px solid #e1e7ef;border-top:1px solid #9a9a9a;border-radius:2px"></div>
<svg style="left:747px;top:99px" width="13" height="12" viewBox="0 0 13 12"><path d="M1.5 1.5 L11 10.5 M11 1.5 L1.5 10.5" stroke="#a4a4a4" stroke-width="2.8" stroke-linecap="square"/><path d="M2.5 1.5 L6 5 L9.5 1.5" stroke="#d0d0d0" stroke-width="0.8" fill="none"/></svg>
<div class="a" style="left:767px;top:91px;width:1px;height:18px;background:#6f7e88"></div>
<svg style="left:777px;top:92px" width="14" height="16" viewBox="0 0 14 16"><path d="M3.5 6.5 V15.5 H13.5 V5 L10.5 2 H8" fill="#fafafa" stroke="#a8a8a8"/><path d="M1 5.5 L4.5 1.5 L8 5.5 H6 V9 H3 V5.5 Z" fill="#fff" stroke="#a8a8a8"/><path d="M7 11.5 h4 M9 10 v3" stroke="#a0a0a0"/></svg>
<svg style="left:800px;top:93px" width="15" height="16" viewBox="0 0 15 16"><path d="M7 1 L11.5 0.5 L11 2.5 Q14.5 4 13 8 L10.5 6.5 Q11 4.5 9 4 L8.5 5.5 Z" fill="#f5c84a" stroke="#d0901a" stroke-width="0.9"/><path d="M8 15 L3.5 15.5 L4 13.5 Q0.5 12 2 8 L4.5 9.5 Q4 11.5 6 12 L6.5 10.5 Z" fill="#f5c84a" stroke="#d0901a" stroke-width="0.9"/></svg>
<div class="a" style="left:272px;top:125px;width:268px;height:20px;border:1px solid #b9cde6;border-bottom:none;border-radius:4px 4px 0 0;background:linear-gradient(#dfe6f4 0,#dfe6f4 40%,#fff 100%)"></div>
<div class="a" style="left:272px;top:133px;width:1px;height:14px;background:linear-gradient(#ffffff00,#fff)"></div>
<div class="a" style="left:539px;top:133px;width:1px;height:14px;background:linear-gradient(#ffffff00,#fff)"></div>
<div class="t" style="left:278px;top:129px;font-weight:bold;color:#1b4880;letter-spacing:-0.15px">Dependencies</div>
<svg style="left:445px;top:131px" width="17" height="17" viewBox="0 0 17 17"><path d="M2.5 3 V15 M0.5 12.5 L2.5 15 L4.5 12.5" stroke="#505050" fill="none"/><text x="5.5" y="8" font-family="Liberation Sans" font-weight="bold" font-size="12" fill="#1f8a78">a</text><text x="9" y="17" font-family="Liberation Sans" font-weight="bold" font-size="11" fill="#9a2a9a">z</text></svg>
<svg style="left:470px;top:130px" width="13" height="18" viewBox="0 0 13 18"><circle cx="3.5" cy="3" r="2.6" fill="#4aa04a"/><path d="M3.5 7 V15.5 H8 M3.5 11.5 H8 M1.5 9 L3.5 7 L5.5 9" stroke="#5a7090" fill="none"/><rect x="8.5" y="9.5" width="3" height="3" fill="#fff" stroke="#d0a040"/><rect x="8.5" y="13.5" width="3" height="3" fill="#fff" stroke="#d0a040"/></svg>
<svg style="left:492px;top:133px" width="15" height="12" viewBox="0 0 15 12"><rect x="0.5" y="1.5" width="3" height="9" rx="1" fill="#d8e080" stroke="#98a040"/><rect x="5.5" y="1.5" width="3" height="9" rx="1" fill="#f0c870" stroke="#b08830"/><rect x="10.5" y="1.5" width="3" height="9" rx="1" fill="#a8c8e8" stroke="#6a90b8"/></svg>
<div class="a" style="left:511px;top:129px;width:23px;height:20px;background:linear-gradient(#d2d2d4,#e6e8ec 40%,#e4e8f0);border:1px solid #55585e;border-radius:3px;box-shadow:inset 0 0 0 1px #f4f4f4"></div>
<svg style="left:516px;top:132px" width="14" height="14" viewBox="0 0 14 14"><path d="M0 3 H6 M4 1 L6 3 L4 5 M7 0 V6 M0 11 H6 M4 9 L6 11 L4 13 M7 8 V14" stroke="#3a4a5a" fill="none" stroke-width="0.9"/><path d="M5 5.5 H9.5 V3 L13.5 7 L9.5 11 V8.5 H5 Z" fill="#f8d050" stroke="#c08a10"/></svg>
<div class="a" style="left:279px;top:157px;width:175px;height:352px;background:#fff;border:1px solid #828790"></div>
<div class="a" style="left:460px;top:158px;width:72px;height:23px;background:linear-gradient(#f4f4f4 0,#f2f2f2 18%,#e8e8e8 20%,#e8e8e8 40%,#d2d2d2 42%,#cecece 100%);border:1px solid #5c5c5c;border-radius:3px;box-shadow:inset 0 0 0 1px #fafafa"></div>
<div class="t" style="left:460px;top:163px;width:72px;text-align:center;color:#000">Add...</div>
<div class="a" style="left:460px;top:184px;width:72px;height:23px;background:#fcfcfc;border:1px solid #bfc3c8;border-radius:3px"></div>
<div class="t" style="left:460px;top:189px;width:72px;text-align:center;color:#838383;letter-spacing:-0.25px">Remove</div>
<div class="a" style="left:460px;top:210px;width:72px;height:23px;background:#fcfcfc;border:1px solid #bfc3c8;border-radius:3px"></div>
<div class="t" style="left:460px;top:215px;width:72px;text-align:center;color:#838383;letter-spacing:-0.25px">Properties...</div>
<div class="a" style="left:460px;top:236px;width:72px;height:23px;background:#fcfcfc;border:1px solid #bfc3c8;border-radius:3px"></div>
<div class="t" style="left:460px;top:241px;width:72px;text-align:center;color:#838383;letter-spacing:-0.25px">Manage...</div>
<div class="a" style="left:550px;top:125px;width:268px;height:20px;border:1px solid #b9cde6;border-bottom:none;border-radius:4px 4px 0 0;background:linear-gradient(#dfe6f4 0,#dfe6f4 40%,#fff 100%)"></div>
<div class="a" style="left:550px;top:133px;width:1px;height:14px;background:linear-gradient(#ffffff00,#fff)"></div>
<div class="a" style="left:817px;top:133px;width:1px;height:14px;background:linear-gradient(#ffffff00,#fff)"></div>
<div class="t" style="left:556px;top:129px;font-weight:bold;color:#1b4880;letter-spacing:-0.15px">Dependency Management</div>
<svg style="left:746px;top:131px" width="17" height="17" viewBox="0 0 17 17"><path d="M2.5 3 V15 M0.5 12.5 L2.5 15 L4.5 12.5" stroke="#505050" fill="none"/><text x="5.5" y="8" font-family="Liberation Sans" font-weight="bold" font-size="12" fill="#1f8a78">a</text><text x="9" y="17" font-family="Liberation Sans" font-weight="bold" font-size="11" fill="#9a2a9a">z</text></svg>
<svg style="left:770px;top:133px" width="15" height="12" viewBox="0 0 15 12"><rect x="0.5" y="1.5" width="3" height="9" rx="1" fill="#d8e080" stroke="#98a040"/><rect x="5.5" y="1.5" width="3" height="9" rx="1" fill="#f0c870" stroke="#b08830"/><rect x="10.5" y="1.5" width="3" height="9" rx="1" fill="#a8c8e8" stroke="#6a90b8"/></svg>
<div class="a" style="left:789px;top:129px;width:23px;height:20px;background:linear-gradient(#d2d2d4,#e6e8ec 40%,#e4e8f0);border:1px solid #55585e;border-radius:3px;box-shadow:inset 0 0 0 1px #f4f4f4"></div>
<svg style="left:794px;top:132px" width="14" height="14" viewBox="0 0 14 14"><path d="M0 3 H6 M4 1 L6 3 L4 5 M7 0 V6 M0 11 H6 M4 9 L6 11 L4 13 M7 8 V14" stroke="#3a4a5a" fill="none" stroke-width="0.9"/><path d="M5 5.5 H9.5 V3 L13.5 7 L9.5 11 V8.5 H5 Z" fill="#f8d050" stroke="#c08a10"/></svg>
<div class="a" style="left:556px;top:157px;width:176px;height:352px;background:#fff;border:1px solid #828790"></div>
<div class="a" style="left:738px;top:158px;width:72px;height:23px;background:linear-gradient(#f4f4f4 0,#f2f2f2 18%,#e8e8e8 20%,#e8e8e8 40%,#d2d2d2 42%,#cecece 100%);border:1px solid #5c5c5c;border-radius:3px;box-shadow:inset 0 0 0 1px #fafafa"></div>
<div class="t" style="left:738px;top:163px;width:72px;text-align:center;color:#000">Add...</div>
<div class="a" style="left:738px;top:184px;width:72px;height:23px;background:#fcfcfc;border:1px solid #bfc3c8;border-radius:3px"></div>
<div class="t" style="left:738px;top:189px;width:72px;text-align:center;color:#838383;letter-spacing:-0.25px">Remove</div>
<div class="a" style="left:738px;top:210px;width:72px;height:23px;background:#fcfcfc;border:1px solid #bfc3c8;border-radius:3px"></div>
<div class="t" style="left:738px;top:215px;width:72px;text-align:center;color:#838383;letter-spacing:-0.25px">Properties...</div>
<div class="t" style="left:269px;top:521px;letter-spacing:-0.1px">To manage your transitive dependency exclusions, please use the <span class="lk">Dependency Hierarchy</span> page.</div>
<div class="a" style="left:264px;top:540px;width:562px;height:1px;background:#a2a6ae"></div>
<div class="a" style="left:321px;top:541px;width:1px;height:23px;background:#a2a6ae"></div>
<div class="t" style="left:268px;top:545px;letter-spacing:-0.1px">Overview</div>
<div class="a" style="left:321px;top:540px;width:82px;height:24px;background:#fff;border:1px solid #a2a6ae;border-top:none;border-radius:0 0 4px 4px"></div>
<div class="t" style="left:326px;top:545px;letter-spacing:-0.1px">Dependencies</div>
<div class="a" style="left:530px;top:541px;width:1px;height:23px;background:#a2a6ae"></div>
<div class="t" style="left:408px;top:545px;letter-spacing:-0.1px">Dependency Hierarchy</div>
<div class="a" style="left:613px;top:541px;width:1px;height:23px;background:#a2a6ae"></div>
<div class="t" style="left:536px;top:545px;letter-spacing:-0.1px">Effective POM</div>
<div class="a" style="left:668px;top:541px;width:1px;height:23px;background:#a2a6ae"></div>
<div class="t" style="left:618px;top:545px;letter-spacing:-0.1px">pom.xml</div>
<div class="a" style="left:264px;top:541px;width:1px;height:23px;background:#a2a6ae"></div>
<svg style="left:341px;top:236px" width="12" height="20" viewBox="0 0 12 20"><path d="M0.5 0.5 V16 L4 12.5 L6.5 18.5 L9 17.5 L6.5 11.5 H11 Z" fill="#fff" stroke="#000"/></svg>
<div class="a" style="left:833px;top:52px;width:188px;height:256px;background:#fff;border-radius:5px"></div>
<div class="a" style="left:833px;top:52px;width:95px;height:25px;background:linear-gradient(#e4e4e4 0,#e4e4e4 40%,#e2e8f4 41%,#e6ecf6 54%,#fff 58%);border-top-left-radius:5px;border-top-right-radius:5px"></div>
<div class="a" style="left:927px;top:56px;width:1px;height:16px;background:linear-gradient(#c8ccd4,#e0e6f0 70%,#fff)"></div>
<svg style="left:841px;top:59px" width="12" height="15" viewBox="0 0 12 15"><path d="M0.5 0.5 H11.5 V14.5 L9 12.5 L6 14.5 L3 12.5 L0.5 14.5 Z" fill="#f4f4f6" stroke="#5a5a68"/><path d="M2.5 3.5h7M2.5 6h7M2.5 8.5h7M2.5 11h7" stroke="#7a7a88" stroke-width="0.9"/></svg>
<div class="t" style="left:858px;top:59px;letter-spacing:-0.3px">Task List</div>
<svg style="left:911px;top:61px" width="10" height="10" viewBox="0 0 10 10"><g fill="#fff" shape-rendering="crispEdges"><rect x="1" y="1" width="2" height="1"/><rect x="7" y="1" width="2" height="1"/><rect x="1" y="2" width="3" height="1"/><rect x="6" y="2" width="3" height="1"/><rect x="2" y="3" width="6" height="1"/><rect x="3" y="4" width="4" height="1"/><rect x="3" y="5" width="4" height="1"/><rect x="2" y="6" width="6" height="1"/><rect x="1" y="7" width="3" height="1"/><rect x="6" y="7" width="3" height="1"/><rect x="1" y="8" width="2" height="1"/><rect x="7" y="8" width="2" height="1"/></g><g fill="#505050" shape-rendering="crispEdges"><rect x="0" y="0" width="1" height="1"/><rect x="1" y="0" width="1" height="1"/><rect x="2" y="0" width="1" height="1"/><rect x="7" y="0" width="1" height="1"/><rect x="8" y="0" width="1" height="1"/><rect x="9" y="0" width="1" height="1"/><rect x="0" y="1" width="1" height="1"/><rect x="3" y="1" width="1" height="1"/><rect x="6" y="1" width="1" height="1"/><rect x="9" y="1" width="1" height="1"/><rect x="0" y="2" width="1" height="1"/><rect x="4" y="2" width="1" height="1"/><rect x="5" y="2" width="1" height="1"/><rect x="9" y="2" width="1" height="1"/><rect x="1" y="3" width="1" height="1"/><rect x="8" y="3" width="1" height="1"/><rect x="2" y="4" width="1" height="1"/><rect x="7" y="4" width="1" height="1"/><rect x="2" y="5" width="1" height="1"/><rect x="7" y="5" width="1" height="1"/><rect x="1" y="6" width="1" height="1"/><rect x="8" y="6" width="1" height="1"/><rect x="0" y="7" width="1" height="1"/><rect x="4" y="7" width="1" height="1"/><rect x="5" y="7" width="1" height="1"/><rect x="9" y="7" width="1" height="1"/><rect x="0" y="8" width="1" height="1"/><rect x="3" y="8" width="1" height="1"/><rect x="6" y="8" width="1" height="1"/><rect x="9" y="8" width="1" height="1"/><rect x="0" y="9" width="1" height="1"/><rect x="1" y="9" width="1" height="1"/><rect x="2" y="9" width="1" height="1"/><rect x="7" y="9" width="1" height="1"/><rect x="8" y="9" width="1" height="1"/><rect x="9" y="9" width="1" height="1"/></g></svg>
<svg style="left:974px;top:60px" width="10" height="4" viewBox="0 0 10 4"><rect x="0.5" y="0.5" width="9" height="3" fill="#fff" stroke="#5e5e5e"/></svg>
<svg style="left:997px;top:60px" width="10" height="10" viewBox="0 0 10 10"><rect x="0.5" y="0.5" width="9" height="9" fill="#fff" stroke="#5e5e5e"/><rect x="1" y="2" width="8" height="1" fill="#5e5e5e"/></svg>
<svg style="left:848px;top:83px" width="11" height="15" viewBox="0 0 11 15"><path d="M0.5 4.5 L3.5 1.5 H8.5 V14.5 H0.5 Z" fill="#eef2fa" stroke="#8a94b0"/><path d="M0.5 8.5 H8.5" stroke="#c8d0e0"/><path d="M8 0 L11 3 L8 6 L5 3 Z" fill="#f4c84a" stroke="#c09020" stroke-width="0.8"/></svg>
<svg style="left:868px;top:89px" width="7" height="4" viewBox="0 0 7 4"><path d="M0 0 H7 L3.5 4 Z" fill="#1a1a1a"/></svg>
<div class="a" style="left:881px;top:82px;width:1px;height:17px;background:#7c8490"></div>
<div class="a" style="left:887px;top:81px;width:23px;height:21px;background:linear-gradient(#f0f0f0,#d8d8d8);border:1px solid #5e6166;border-radius:3px"></div>
<svg style="left:891px;top:84px" width="15" height="15" viewBox="0 0 15 15"><rect x="0.5" y="0.5" width="7" height="4" fill="#b8c8f0" stroke="#6a7ab0"/><path d="M4 5 V13.5 H8 M4 9.5 H8 M8 2.5 H14" stroke="#5a7aa0" fill="none"/><rect x="8.5" y="8" width="3" height="3" fill="#a8c0e8" stroke="#4a6aa0" stroke-width="0.7"/><rect x="8.5" y="12" width="3" height="3" fill="#a8c0e8" stroke="#4a6aa0" stroke-width="0.7"/><path d="M12 6h2M12 9.5h2M12 13.5h2" stroke="#5a7aa0"/></svg>
<svg style="left:914px;top:84px" width="15" height="15" viewBox="0 0 15 15"><circle cx="4" cy="4" r="3.3" fill="#fff" stroke="#4a6aa0"/><path d="M4 2v2h1.5" stroke="#4a6aa0" fill="none" stroke-width="0.8"/><path d="M4 7.5 V13.5 H8 M4 10 H8 M8 3.5 H14" stroke="#5a7aa0" fill="none"/><rect x="8.5" y="8.5" width="3" height="3" fill="#a8c0e8" stroke="#4a6aa0" stroke-width="0.7"/><rect x="8.5" y="12" width="3" height="3" fill="#a8c0e8" stroke="#4a6aa0" stroke-width="0.7"/><path d="M12 6.5h2M12 10h2M12 13.5h2" stroke="#5a7aa0"/></svg>
<div class="a" style="left:935px;top:82px;width:1px;height:17px;background:#7c8490"></div>
<svg style="left:946px;top:85px" width="14" height="14" viewBox="0 0 14 14"><circle cx="4.5" cy="4.5" r="4" fill="#d2d2d2"/><circle cx="10" cy="6" r="3.8" fill="#c2c2c2"/><circle cx="5.5" cy="10" r="3.8" fill="#8a7ac8"/><path d="M3 10h5" stroke="#e8e8e8"/></svg>
<div class="a" style="left:966px;top:82px;width:1px;height:17px;background:#7c8490"></div>
<svg style="left:976px;top:83px" width="16" height="16" viewBox="0 0 16 16"><path d="M0.5 0.5 L15 15" stroke="#1a3a90" stroke-width="1.4"/><path d="M3 8 L6 12 L12 5" stroke="#3a6a8a" fill="none" stroke-width="1.6"/></svg>
<svg style="left:998px;top:83px" width="17" height="16" viewBox="0 0 17 16"><circle cx="3.5" cy="2.5" r="2" fill="#f0a020"/><path d="M1 5.5 H6 V10.5 H5 V15.5 H2 V10.5 H1 Z" fill="#f0a020" stroke="#b07010" stroke-width="0.6"/><circle cx="11" cy="2.5" r="2" fill="#a0b0c0"/><path d="M8.5 5.5 H13.5 V10.5 H12.5 V15.5 H9.5 V10.5 H8.5 Z" fill="#b0c0d0" stroke="#708090" stroke-width="0.6"/><path d="M6 0.5 L16.5 11" stroke="#1a3a90" stroke-width="1.3"/></svg>
<svg style="left:850px;top:111px" width="11" height="6" viewBox="0 0 11 6"><path d="M0.5 0.5 H10.5 L5.5 5.5 Z" fill="#fff" stroke="#6b6b6b"/></svg>
<div class="a" style="left:839px;top:132px;width:68px;height:20px;background:#fff;border:1px solid #a8a8a8"></div>
<div class="t" style="left:850px;top:135px;color:#555">Find</div>
<svg style="left:889px;top:136px" width="12" height="12" viewBox="0 0 12 12"><circle cx="4.5" cy="4.5" r="3.7" fill="#fff" stroke="#666" stroke-width="1.2"/><path d="M7.5 7.5 L11 11" stroke="#555" stroke-width="2"/></svg>
<svg style="left:920px;top:138px" width="5" height="9" viewBox="0 0 5 9"><path d="M0 0 L5 4.5 L0 9 Z" fill="#2a2a2a"/></svg>
<div class="t" style="left:934px;top:135px;color:#2a5cc8">All</div>
<svg style="left:960px;top:138px" width="5" height="9" viewBox="0 0 5 9"><path d="M0 0 L5 4.5 L0 9 Z" fill="#2a2a2a"/></svg>
<div class="t" style="left:974px;top:135px;color:#2a5cc8">Activa...</div>
<div class="a" style="left:836px;top:227px;width:183px;height:1px;background:#aac0da"></div>
<div class="a" style="left:836px;top:228px;width:183px;height:23px;background:#dfe6f4"></div>
<div class="a" style="left:836px;top:251px;width:183px;height:14px;background:#eaf0f8"></div>
<svg style="left:842px;top:233px" width="15" height="15" viewBox="0 0 15 15"><circle cx="7.5" cy="7.5" r="6.6" fill="#fff" stroke="#2a5a9a" stroke-width="1.4"/><rect x="6.6" y="6.5" width="1.9" height="5" fill="#2a5a9a"/><circle cx="7.5" cy="4.2" r="1.1" fill="#2a5a9a"/></svg>
<div class="t" style="left:862px;top:235px;font-size:13px;font-weight:bold;color:#183c68">Connect Mylyn</div>
<svg style="left:1000px;top:236px" width="10" height="10" viewBox="0 0 10 10"><g fill="#fff" shape-rendering="crispEdges"><rect x="1" y="1" width="2" height="1"/><rect x="7" y="1" width="2" height="1"/><rect x="1" y="2" width="3" height="1"/><rect x="6" y="2" width="3" height="1"/><rect x="2" y="3" width="6" height="1"/><rect x="3" y="4" width="4" height="1"/><rect x="3" y="5" width="4" height="1"/><rect x="2" y="6" width="6" height="1"/><rect x="1" y="7" width="3" height="1"/><rect x="6" y="7" width="3" height="1"/><rect x="1" y="8" width="2" height="1"/><rect x="7" y="8" width="2" height="1"/></g><g fill="#505050" shape-rendering="crispEdges"><rect x="0" y="0" width="1" height="1"/><rect x="1" y="0" width="1" height="1"/><rect x="2" y="0" width="1" height="1"/><rect x="7" y="0" width="1" height="1"/><rect x="8" y="0" width="1" height="1"/><rect x="9" y="0" width="1" height="1"/><rect x="0" y="1" width="1" height="1"/><rect x="3" y="1" width="1" height="1"/><rect x="6" y="1" width="1" height="1"/><rect x="9" y="1" width="1" height="1"/><rect x="0" y="2" width="1" height="1"/><rect x="4" y="2" width="1" height="1"/><rect x="5" y="2" width="1" height="1"/><rect x="9" y="2" width="1" height="1"/><rect x="1" y="3" width="1" height="1"/><rect x="8" y="3" width="1" height="1"/><rect x="2" y="4" width="1" height="1"/><rect x="7" y="4" width="1" height="1"/><rect x="2" y="5" width="1" height="1"/><rect x="7" y="5" width="1" height="1"/><rect x="1" y="6" width="1" height="1"/><rect x="8" y="6" width="1" height="1"/><rect x="0" y="7" width="1" height="1"/><rect x="4" y="7" width="1" height="1"/><rect x="5" y="7" width="1" height="1"/><rect x="9" y="7" width="1" height="1"/><rect x="0" y="8" width="1" height="1"/><rect x="3" y="8" width="1" height="1"/><rect x="6" y="8" width="1" height="1"/><rect x="9" y="8" width="1" height="1"/><rect x="0" y="9" width="1" height="1"/><rect x="1" y="9" width="1" height="1"/><rect x="2" y="9" width="1" height="1"/><rect x="7" y="9" width="1" height="1"/><rect x="8" y="9" width="1" height="1"/><rect x="9" y="9" width="1" height="1"/></g></svg>
<div class="t" style="left:862px;top:256px;letter-spacing:-0.1px"><span class="lk" style="color:#1f6ad0">Connect</span> to your task and</div>
<div class="t" style="left:862px;top:271px;letter-spacing:-0.1px">ALM tools or <span class="lk" style="color:#1f6ad0">create</span> a local</div>
<div class="t" style="left:862px;top:286px;">task.</div>
<div class="a" style="left:833px;top:312px;width:188px;height:255px;background:#fff;border-radius:5px"></div>
<div class="a" style="left:833px;top:312px;width:91px;height:25px;background:linear-gradient(#e4e4e4 0,#e4e4e4 40%,#e2e8f4 41%,#e6ecf6 54%,#fff 58%);border-top-left-radius:5px;border-top-right-radius:5px"></div>
<div class="a" style="left:923px;top:316px;width:1px;height:16px;background:linear-gradient(#c8ccd4,#e0e6f0 70%,#fff)"></div>
<svg style="left:839px;top:319px" width="14" height="15" viewBox="0 0 14 15"><rect x="0.5" y="0.5" width="5" height="5" fill="#dbe6f8" stroke="#2a6ac0"/><rect x="0.5" y="9.5" width="5" height="5" fill="#dbe6f8" stroke="#2a6ac0"/><path d="M7 3h6M8 7h2M11 7h2M7 12h6" stroke="#2a6ac0"/></svg>
<div class="t" style="left:858px;top:319px;">Outline</div>
<svg style="left:905px;top:321px" width="10" height="10" viewBox="0 0 10 10"><g fill="#fff" shape-rendering="crispEdges"><rect x="1" y="1" width="2" height="1"/><rect x="7" y="1" width="2" height="1"/><rect x="1" y="2" width="3" height="1"/><rect x="6" y="2" width="3" height="1"/><rect x="2" y="3" width="6" height="1"/><rect x="3" y="4" width="4" height="1"/><rect x="3" y="5" width="4" height="1"/><rect x="2" y="6" width="6" height="1"/><rect x="1" y="7" width="3" height="1"/><rect x="6" y="7" width="3" height="1"/><rect x="1" y="8" width="2" height="1"/><rect x="7" y="8" width="2" height="1"/></g><g fill="#505050" shape-rendering="crispEdges"><rect x="0" y="0" width="1" height="1"/><rect x="1" y="0" width="1" height="1"/><rect x="2" y="0" width="1" height="1"/><rect x="7" y="0" width="1" height="1"/><rect x="8" y="0" width="1" height="1"/><rect x="9" y="0" width="1" height="1"/><rect x="0" y="1" width="1" height="1"/><rect x="3" y="1" width="1" height="1"/><rect x="6" y="1" width="1" height="1"/><rect x="9" y="1" width="1" height="1"/><rect x="0" y="2" width="1" height="1"/><rect x="4" y="2" width="1" height="1"/><rect x="5" y="2" width="1" height="1"/><rect x="9" y="2" width="1" height="1"/><rect x="1" y="3" width="1" height="1"/><rect x="8" y="3" width="1" height="1"/><rect x="2" y="4" width="1" height="1"/><rect x="7" y="4" width="1" height="1"/><rect x="2" y="5" width="1" height="1"/><rect x="7" y="5" width="1" height="1"/><rect x="1" y="6" width="1" height="1"/><rect x="8" y="6" width="1" height="1"/><rect x="0" y="7" width="1" height="1"/><rect x="4" y="7" width="1" height="1"/><rect x="5" y="7" width="1" height="1"/><rect x="9" y="7" width="1" height="1"/><rect x="0" y="8" width="1" height="1"/><rect x="3" y="8" width="1" height="1"/><rect x="6" y="8" width="1" height="1"/><rect x="9" y="8" width="1" height="1"/><rect x="0" y="9" width="1" height="1"/><rect x="1" y="9" width="1" height="1"/><rect x="2" y="9" width="1" height="1"/><rect x="7" y="9" width="1" height="1"/><rect x="8" y="9" width="1" height="1"/><rect x="9" y="9" width="1" height="1"/></g></svg>
<svg style="left:974px;top:320px" width="10" height="4" viewBox="0 0 10 4"><rect x="0.5" y="0.5" width="9" height="3" fill="#fff" stroke="#5e5e5e"/></svg>
<svg style="left:997px;top:320px" width="10" height="10" viewBox="0 0 10 10"><rect x="0.5" y="0.5" width="9" height="9" fill="#fff" stroke="#5e5e5e"/><rect x="1" y="2" width="8" height="1" fill="#5e5e5e"/></svg>
<svg style="left:947px;top:345px" width="14" height="14" viewBox="0 0 14 14"><circle cx="4.5" cy="4.5" r="4" fill="#d2d2d2"/><circle cx="10" cy="6" r="3.8" fill="#c2c2c2"/><circle cx="5.5" cy="10" r="3.8" fill="#8c8c8c"/><path d="M3 10h5" stroke="#e8e8e8"/></svg>
<svg style="left:970px;top:345px" width="13" height="13" viewBox="0 0 13 13"><rect x="0.5" y="0.5" width="10" height="10" fill="#e8eef6" stroke="#a0aec4"/><rect x="2.5" y="2.5" width="10" height="10" fill="#f4f8fc" stroke="#8494b0"/><rect x="4" y="7" width="7" height="1.5" fill="#1f4f9a"/></svg>
<svg style="left:1000px;top:346px" width="11" height="6" viewBox="0 0 11 6"><path d="M0.5 0.5 H10.5 L5.5 5.5 Z" fill="#fff" stroke="#6b6b6b"/></svg>
<div class="a" style="left:856px;top:362px;width:46px;height:18px;background:linear-gradient(#fafafa 0,#fafafa 55%,#e6e6e6 56%,#e6e6e6 100%);border:1px solid #d4d6da;border-top-color:#c8c8c8;border-radius:3px"></div>
<svg style="left:859px;top:365px" width="16" height="12" viewBox="0 0 16 12"><text x="0" y="11" font-family="Liberation Sans" font-weight="bold" font-size="13" fill="#1f5a90">?</text><path d="M6.5 7.5h3M6.5 9.5h3" stroke="#1f5a90"/><text x="8.5" y="11" font-family="Liberation Sans" font-weight="bold" font-size="13" fill="#1f5a90">?</text></svg>
<div class="t" style="left:879px;top:364px;">xml</div>
<svg style="left:846px;top:387px" width="6" height="8" viewBox="0 0 6 8"><path d="M0.5 0.5 L5 4 L0.5 7.5 Z" fill="#fff" stroke="#8c8c8c"/></svg>
<svg style="left:860px;top:385px" width="14" height="8" viewBox="0 0 14 8"><path d="M3.8 0.5 L0.8 4 L3.8 7.5 M10.2 0.5 L13.2 4 L10.2 7.5" stroke="#2a5f98" stroke-width="1.3" fill="none"/></svg>
<div class="a" style="left:879px;top:382px;width:141px;height:16px;overflow:hidden"><div class="t" style="left:0;top:0">project xsi:schemaLocation</div></div>
<div class="a" style="left:836px;top:549px;width:183px;height:16px;background:#e8e8e8;border:1px solid #f0f0f0"></div>
<svg style="left:842px;top:553px" width="5" height="8" viewBox="0 0 5 8"><path d="M5 0 L0 4 L5 8 Z" fill="#2a2a2a"/></svg>
<svg style="left:1010px;top:553px" width="5" height="8" viewBox="0 0 5 8"><path d="M0 0 L5 4 L0 8 Z" fill="#2a2a2a"/></svg>
<div class="a" style="left:854px;top:549px;width:41px;height:16px;background:linear-gradient(#f4f4f4,#e6e6e6 50%,#d6d6d6 51%,#dedede);border:1px solid #8a8a8a;border-radius:2px"></div>
<div class="a" style="left:870px;top:553px;width:1px;height:7px;background:#505050"></div>
<div class="a" style="left:873px;top:553px;width:1px;height:7px;background:#505050"></div>
<div class="a" style="left:876px;top:553px;width:1px;height:7px;background:#505050"></div>
<div class="a" style="left:261px;top:571px;width:760px;height:171px;background:#fff;border-radius:5px"></div>
<div class="a" style="left:261px;top:571px;width:101px;height:25px;background:linear-gradient(#e4e4e4 0,#e4e4e4 40%,#e2e8f4 41%,#e6ecf6 54%,#fff 58%);border-top-left-radius:5px;border-top-right-radius:5px"></div>
<div class="a" style="left:361px;top:575px;width:1px;height:16px;background:linear-gradient(#c8ccd4,#e0e6f0 70%,#fff)"></div>
<svg style="left:266px;top:577px" width="15" height="16" viewBox="0 0 15 16"><path d="M1.5 0.5 H8.5 V14.5 H1.5 Z" fill="#f4f6fa" stroke="#8a94a8"/><path d="M8.5 0.5 H12 Q13.5 0.5 13.5 3 Q13.5 6 11 7 L13.5 14.5 H8.5" fill="#e8eef6" stroke="#7a8aa8" stroke-width="0.9"/><path d="M1.5 7.5 H8.5" stroke="#b0c0d8"/><circle cx="5" cy="4.2" r="2.6" fill="#e02424"/><path d="M4 9.5 Q4.6 9.5 5 10.3 L7.3 14.2 Q7.5 15.3 6.5 15.3 H1.5 Q0.5 15.3 0.7 14.2 L3 10.3 Q3.4 9.5 4 9.5 Z" fill="#f8c458" stroke="#d89028" stroke-width="0.7"/><path d="M4 11 V13" stroke="#3a2000"/></svg>
<div class="t" style="left:286px;top:578px;">Problems</div>
<svg style="left:344px;top:580px" width="10" height="10" viewBox="0 0 10 10"><g fill="#fff" shape-rendering="crispEdges"><rect x="1" y="1" width="2" height="1"/><rect x="7" y="1" width="2" height="1"/><rect x="1" y="2" width="3" height="1"/><rect x="6" y="2" width="3" height="1"/><rect x="2" y="3" width="6" height="1"/><rect x="3" y="4" width="4" height="1"/><rect x="3" y="5" width="4" height="1"/><rect x="2" y="6" width="6" height="1"/><rect x="1" y="7" width="3" height="1"/><rect x="6" y="7" width="3" height="1"/><rect x="1" y="8" width="2" height="1"/><rect x="7" y="8" width="2" height="1"/></g><g fill="#505050" shape-rendering="crispEdges"><rect x="0" y="0" width="1" height="1"/><rect x="1" y="0" width="1" height="1"/><rect x="2" y="0" width="1" height="1"/><rect x="7" y="0" width="1" height="1"/><rect x="8" y="0" width="1" height="1"/><rect x="9" y="0" width="1" height="1"/><rect x="0" y="1" width="1" height="1"/><rect x="3" y="1" width="1" height="1"/><rect x="6" y="1" width="1" height="1"/><rect x="9" y="1" width="1" height="1"/><rect x="0" y="2" width="1" height="1"/><rect x="4" y="2" width="1" height="1"/><rect x="5" y="2" width="1" height="1"/><rect x="9" y="2" width="1" height="1"/><rect x="1" y="3" width="1" height="1"/><rect x="8" y="3" width="1" height="1"/><rect x="2" y="4" width="1" height="1"/><rect x="7" y="4" width="1" height="1"/><rect x="2" y="5" width="1" height="1"/><rect x="7" y="5" width="1" height="1"/><rect x="1" y="6" width="1" height="1"/><rect x="8" y="6" width="1" height="1"/><rect x="0" y="7" width="1" height="1"/><rect x="4" y="7" width="1" height="1"/><rect x="5" y="7" width="1" height="1"/><rect x="9" y="7" width="1" height="1"/><rect x="0" y="8" width="1" height="1"/><rect x="3" y="8" width="1" height="1"/><rect x="6" y="8" width="1" height="1"/><rect x="9" y="8" width="1" height="1"/><rect x="0" y="9" width="1" height="1"/><rect x="1" y="9" width="1" height="1"/><rect x="2" y="9" width="1" height="1"/><rect x="7" y="9" width="1" height="1"/><rect x="8" y="9" width="1" height="1"/><rect x="9" y="9" width="1" height="1"/></g></svg>
<div class="t" style="left:367px;top:578px;color:#8aa4c8;font-size:12px">@</div>
<div class="t" style="left:386px;top:578px;color:#8d8d8d;letter-spacing:-0.45px">Javadoc</div>
<svg style="left:438px;top:577px" width="16" height="16" viewBox="0 0 16 16"><path d="M0.5 0.5 H8 L11.5 4 V14.5 H0.5 Z" fill="#fff" stroke="#d0a860"/><path d="M5 4 Q3 4 3 6 V7 L2 7.5 L3 8 V9 Q3 11 5 11 M7 4 Q9 4 9 6" stroke="#a0a0a0" fill="none" stroke-width="0.8"/><path d="M7.5 10.5 H11 V8.5 L15 12 L11 15.5 V13.5 H7.5 Z" fill="#fbe6a0" stroke="#d0a040" stroke-width="0.8"/></svg>
<div class="t" style="left:457px;top:578px;color:#8d8d8d">Declaration</div>
<svg style="left:924px;top:578px" width="14" height="14" viewBox="0 0 14 14"><circle cx="4.5" cy="4.5" r="4" fill="#d2d2d2"/><circle cx="10" cy="6" r="3.8" fill="#c2c2c2"/><circle cx="5.5" cy="10" r="3.8" fill="#8c8c8c"/><path d="M3 10h5" stroke="#e8e8e8"/></svg>
<svg style="left:953px;top:579px" width="11" height="6" viewBox="0 0 11 6"><path d="M0.5 0.5 H10.5 L5.5 5.5 Z" fill="#fff" stroke="#6b6b6b"/></svg>
<svg style="left:974px;top:579px" width="10" height="4" viewBox="0 0 10 4"><rect x="0.5" y="0.5" width="9" height="3" fill="#fff" stroke="#5e5e5e"/></svg>
<svg style="left:997px;top:579px" width="10" height="10" viewBox="0 0 10 10"><rect x="0.5" y="0.5" width="9" height="9" fill="#fff" stroke="#5e5e5e"/><rect x="1" y="2" width="8" height="1" fill="#5e5e5e"/></svg>
<div class="t" style="left:264px;top:600px;letter-spacing:-0.18px">0 errors, 1 warning, 0 others</div>
<div class="a" style="left:264px;top:614px;width:755px;height:1px;background:#a8a8a8"></div>
<div class="a" style="left:264px;top:615px;width:300px;height:23px;background:linear-gradient(#fff 0,#fff 40%,#dde8f5 41%,#d5e3f3 100%);border-right:1px solid #8ac4ee;border-bottom:1px solid #8ac4ee"></div>
<div class="a" style="left:264px;top:615px;width:1px;height:23px;background:#8ac4ee"></div>
<svg style="left:410px;top:617px" width="7" height="4" viewBox="0 0 7 4"><path d="M0.5 3.5 L3.5 0.5 L6.5 3.5" stroke="#4a7ab0" fill="none" stroke-width="1.1"/></svg>
<div class="t" style="left:270px;top:621px;">Description</div>
<div class="a" style="left:564px;top:638px;width:455px;height:1px;background:#e4e4e4"></div>
<div class="a" style="left:653px;top:624px;width:1px;height:14px;background:#e0e4ea"></div>
<div class="a" style="left:773px;top:624px;width:1px;height:14px;background:#e0e4ea"></div>
<div class="a" style="left:863px;top:624px;width:1px;height:14px;background:#e0e4ea"></div>
<div class="a" style="left:953px;top:624px;width:1px;height:14px;background:#e0e4ea"></div>
<div class="t" style="left:570px;top:621px;">Resource</div>
<div class="t" style="left:660px;top:621px;">Path</div>
<div class="t" style="left:780px;top:621px;">Location</div>
<div class="t" style="left:870px;top:621px;">Type</div>
<div class="a" style="left:264px;top:657px;width:755px;height:1px;background:#ececec"></div>
<div class="a" style="left:264px;top:675px;width:755px;height:1px;background:#ececec"></div>
<div class="a" style="left:264px;top:693px;width:755px;height:1px;background:#ececec"></div>
<div class="a" style="left:264px;top:711px;width:755px;height:1px;background:#ececec"></div>
<div class="a" style="left:264px;top:729px;width:755px;height:1px;background:#ececec"></div>
<div class="a" style="left:563px;top:639px;width:1px;height:102px;background:#e6e6e6"></div>
<div class="a" style="left:653px;top:639px;width:1px;height:102px;background:#e6e6e6"></div>
<div class="a" style="left:773px;top:639px;width:1px;height:102px;background:#e6e6e6"></div>
<div class="a" style="left:863px;top:639px;width:1px;height:102px;background:#e6e6e6"></div>
<div class="a" style="left:953px;top:639px;width:1px;height:102px;background:#e6e6e6"></div>
<svg style="left:275px;top:645px" width="6" height="8" viewBox="0 0 6 8"><path d="M0.5 0.5 L5 4 L0.5 7.5 Z" fill="#fff" stroke="#8c8c8c"/></svg>
<svg style="left:287px;top:641px" width="14" height="13" viewBox="0 0 14 13"><path d="M7 0.8 L13.2 12.2 H0.8 Z" fill="#f8c850" stroke="#c88a10" stroke-linejoin="round"/><path d="M7 4 V8.5" stroke="#5a3a00" stroke-width="1.4"/><circle cx="7" cy="10.3" r="0.8" fill="#5a3a00"/></svg>
<div class="t" style="left:307px;top:642px;">Warnings (1 item)</div>
<svg style="left:739px;top:750px" width="2" height="17" viewBox="0 0 2 17"><rect x="0" y="0" width="2" height="2" fill="#8a8272"/><rect x="0" y="5" width="2" height="2" fill="#8a8272"/><rect x="0" y="9" width="2" height="2" fill="#8a8272"/><rect x="0" y="14" width="2" height="2" fill="#8a8272"/></svg>
</body></html>
